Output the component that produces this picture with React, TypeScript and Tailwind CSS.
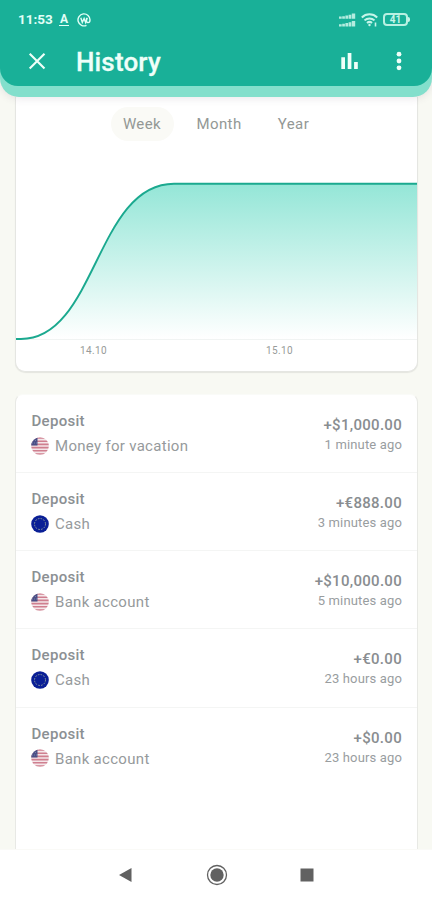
import React, { useState } from 'react'
import clsx from 'clsx'

type Currency = 'usd' | 'eur'

interface Transaction {
  id: number
  type: string
  account: string
  currency: Currency
  amount: string
  time: string
}

const transactions: Transaction[] = [
  { id: 1, type: 'Deposit', account: 'Money for vacation', currency: 'usd', amount: '+$1,000.00', time: '1 minute ago' },
  { id: 2, type: 'Deposit', account: 'Cash', currency: 'eur', amount: '+€888.00', time: '3 minutes ago' },
  { id: 3, type: 'Deposit', account: 'Bank account', currency: 'usd', amount: '+$10,000.00', time: '5 minutes ago' },
  { id: 4, type: 'Deposit', account: 'Cash', currency: 'eur', amount: '+€0.00', time: '23 hours ago' },
  { id: 5, type: 'Deposit', account: 'Bank account', currency: 'usd', amount: '+$0.00', time: '23 hours ago' },
]

const periods = ['Week', 'Month', 'Year']

function UsFlag() {
  return (
    <svg viewBox="0 0 18 18" className="h-[18px] w-[18px] shrink-0">
      <clipPath id="flag">
        <circle cx="9" cy="9" r="8.8" />
      </clipPath>
      <g clipPath="url(#flag)">
        <rect width="18" height="18" fill="#f4e6e9" />
        <path d="M0 1h18M0 4.2h18M0 7.4h18M0 10.6h18M0 13.8h18M0 17h18" stroke="#cf7f8f" strokeWidth="1.6" />
        <rect width="6.5" height="8.5" fill="#4a4f86" />
        <path d="M2 3.5h4M1 6h5" stroke="#8d90b5" strokeWidth=".7" strokeDasharray="1 1" />
      </g>
    </svg>
  )
}

function EuFlag() {
  return (
    <svg viewBox="0 0 18 18" className="h-[18px] w-[18px] shrink-0">
      <circle cx="9" cy="9" r="8.8" fill="#0a1f96" />
      <circle cx="9" cy="9" r="5.5" fill="none" stroke="#8d9c9a" strokeWidth="1" strokeDasharray="1.6 1.28" />
    </svg>
  )
}

function StatusBar() {
  return (
    <div className="flex h-[38px] items-center justify-between pl-[18px] pr-[22px] pt-px text-[#e2fff7]">
      <div className="flex items-center">
        <span className="w-[36px] text-[13.5px] font-bold leading-none">11:53</span>
        <span className="ml-[5px] w-[10px] border-b-[1.5px] border-[#e2fff7] text-center text-[12px] font-bold leading-[11px]">
          A
        </span>
        <svg viewBox="0 0 14 14" className="ml-[8px] h-[14px] w-[14px]" fill="none" stroke="currentColor" strokeWidth="1.4">
          <path d="M9.5 12.3A6 6 0 1 1 13 7c0 1.6-.9 2.6-2 2.6-1.3 0-1.9-1.3-1.4-4.6" />
          <path d="M3.8 4.8l1.5 4.6L7.1 5.5l1.6 4.1 1.5-4.8" />
        </svg>
      </div>
      <div className="flex items-center">
        <svg viewBox="0 0 17 14" className="h-[14px] w-[17px]" fill="#b4ecdf">
          <path d="M0 3.600h2.700v2.200H0zM3.200 3.200h2.700v2.600H3.200zM6.400 2.500h2.700v3.300H6.400zM9.600 1.700h2.700v4.100H9.600zM12.800.500h3.400v5.300h-3.400z" />
          <path d="M0 11.200h2.700v2.200H0zM3.200 10.800h2.700v2.600H3.200zM6.400 10.100h2.700v3.300H6.400zM9.600 9.300h2.700v4.100H9.600zM12.800 8.100h3.400v5.300h-3.400z" />
        </svg>
        <svg viewBox="0 0 18 14" className="ml-[5px] h-[14px] w-[18px]" fill="none" stroke="#c6f5e9" strokeWidth="2">
          <path d="M.8 4.500a11 11 0 0 1 15.400 0M3.500 7.400a7.200 7.200 0 0 1 10 0M6 10a3.700 3.700 0 0 1 5 0" />
          <circle cx="8.500" cy="12" r="1.200" fill="#c6f5e9" stroke="none" />
          <path d="M14.500 9.500v4" strokeWidth="1.600" />
        </svg>
        <div className="ml-[4px] mr-px flex h-[13px] w-[25px] items-center justify-center rounded-[4px] border-2 border-[#b9f0e2] text-[10px] font-bold leading-none text-[#c6f5e9]">
          41
        </div>
        <div className="-ml-px h-[5px] w-[2px] rounded-r-sm bg-[#c6f5e9]" />
      </div>
    </div>
  )
}

function Header() {
  return (
    <header className="relative z-10 h-[97px] shrink-0 rounded-b-[19px] bg-[#83dfcc] shadow-[0_1px_9px_rgba(90,70,100,0.14)]">
      <div className="h-[86px] rounded-b-[18px] bg-[#19b098]">
        <StatusBar />
        <div className="flex h-[46px] items-center pl-[28px] pr-[30px] text-[#effff9]">
          <button aria-label="Close">
            <svg viewBox="0 0 18 18" className="h-[18px] w-[18px]" fill="none" stroke="currentColor" strokeWidth="2.1">
              <path d="M1.700 1.700l14.800 14.800M16.500 1.700L1.700 16.500" />
            </svg>
          </button>
          <h1 className="ml-[30px] flex-1 pt-[2px] text-[26px] font-medium leading-none tracking-[0.15px] [-webkit-text-stroke:0.3px]">
            History
          </h1>
          <button aria-label="Statistics">
            <svg viewBox="0 0 18 18" className="h-[18px] w-[18px]" fill="currentColor">
              <path d="M1.300 5.200H5V17H1.300zM7.700 1h3.700v16H7.700zM14.100 10h3.700v7h-3.700z" />
            </svg>
          </button>
          <button aria-label="More" className="ml-[38px]">
            <svg viewBox="0 0 6 20" className="h-5 w-[6px]" fill="currentColor">
              <circle cx="3" cy="3.200" r="2.400" />
              <circle cx="3" cy="10" r="2.400" />
              <circle cx="3" cy="16.800" r="2.400" />
            </svg>
          </button>
        </div>
      </div>
    </header>
  )
}

function BalanceChart() {
  return (
    <svg viewBox="0 0 401 164" className="mt-[40px] block h-[164px] w-full shrink-0">
      <defs>
        <linearGradient id="area" x1="0" y1="0" x2="0" y2="1">
          <stop offset="0" stopColor="#94e6d7" />
          <stop offset="1" stopColor="#ffffff" />
        </linearGradient>
      </defs>
      <path d="M0 158.500H401" stroke="#f1f4f3" />
      <path d="M0 158H5C80 158 80 2.700 158 2.700H401V158Z" fill="url(#area)" />
      <path d="M0 158H5C80 158 80 2.700 158 2.700H401" fill="none" stroke="#1ba98f" strokeWidth="1.900" />
    </svg>
  )
}

function ChartCard() {
  const [period, setPeriod] = useState('Week')

  return (
    <section className="ml-[15px] mr-[14px] flex h-[275px] shrink-0 flex-col overflow-hidden rounded-b-[10px] border border-t-0 border-[#e5e6e2] bg-white shadow-[0_1px_1px_rgba(0,0,0,0.08)]">
      <div className="mt-[10px] flex h-[34px] justify-center">
        {periods.map((name) => (
          <button
            key={name}
            onClick={() => setPeriod(name)}
            className={clsx(
              'h-[34px] rounded-full text-[15px] tracking-[0.4px] text-[#939895]',
              name === 'Week' && 'w-[63px]',
              name === 'Month' && 'ml-[10px] w-[71px]',
              name === 'Year' && 'ml-[10px] w-[58px]',
              period === name && 'bg-[#fafaf6]'
            )}
          >
            {name}
          </button>
        ))}
      </div>
      <BalanceChart />
      <div className="flex pt-px text-[10px] leading-none tracking-[0.4px] text-[#979b99]">
        <span className="ml-[64px] w-[186px]">14.10</span>
        <span>15.10</span>
      </div>
    </section>
  )
}

function TransactionRow({ item }: { item: Transaction }) {
  return (
    <li className="flex h-[78.15px] justify-between border-b border-[#f4f5f4] px-[15px] last:border-b-0">
      <div className="pt-[16px]">
        <div className="pl-[0.5px] text-[15px] font-medium leading-5 tracking-[0.3px] text-[#8b9093]">{item.type}</div>
        <div className="mt-[4px] flex items-center">
          {item.currency === 'usd' ? <UsFlag /> : <EuFlag />}
          <span className="ml-[6px] pt-px text-[15px] leading-5 tracking-[0.3px] text-[#969a9c]">{item.account}</span>
        </div>
      </div>
      <div className="pt-[20px] text-right">
        <div className="text-[15px] font-medium leading-5 tracking-[0.3px] text-[#898d90]">{item.amount}</div>
        <div className="text-[13px] leading-5 tracking-[0.15px] text-[#999d9f]">{item.time}</div>
      </div>
    </li>
  )
}

function NavigationBar() {
  return (
    <nav className="flex h-[51px] shrink-0 items-center justify-center border-t border-[#fafaf7] bg-white text-[#616161]">
      <svg viewBox="0 0 14 16" className="h-4 w-[14px]" fill="currentColor">
        <path d="M1 8L13.500 1v14z" />
      </svg>
      <svg viewBox="0 0 22 22" className="ml-[74px] h-[22px] w-[22px]">
        <circle cx="11" cy="11" r="9.500" fill="none" stroke="currentColor" strokeWidth="1.300" />
        <circle cx="11" cy="11" r="6.700" fill="currentColor" />
      </svg>
      <svg viewBox="0 0 14 14" className="ml-[72px] h-[14px] w-[14px]" fill="currentColor">
        <path d="M.5.5h13v13H.5z" />
      </svg>
    </nav>
  )
}

export default function App() {
  return (
    <div className="flex h-[900px] w-[432px] flex-col overflow-hidden bg-[#f8f9f3] font-[Roboto,sans-serif]">
      <Header />
      <main className="flex min-h-0 flex-1 flex-col overflow-hidden">
        <ChartCard />
        <section className="ml-[15px] mr-[14px] mt-[22px] flex-1 rounded-t-[8px] border border-b-0 border-[#e8e9e5] border-t-[#fafbf8] bg-white">
          <ul>
            {transactions.map((item) => (
              <TransactionRow key={item.id} item={item} />
            ))}
          </ul>
        </section>
      </main>
      <NavigationBar />
    </div>
  )
}
